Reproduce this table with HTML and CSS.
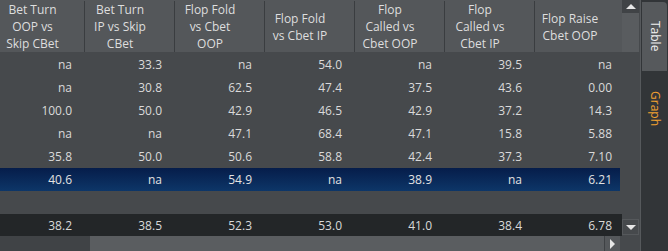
FILE: index.html
```html
<!DOCTYPE html>
<html>
<head>
<meta charset="utf-8">
<link rel="stylesheet" href="styles.css">
</head>
<body>
<div class="app">
  <div class="grid">
    <div class="viewport">
      <div class="row thead">
        <div class="hc">Bet Turn<br>OOP vs<br>Skip CBet</div>
        <div class="hc sep">Bet Turn<br>IP vs Skip<br>CBet</div>
        <div class="hc sep">Flop Fold<br>vs Cbet<br>OOP</div>
        <div class="hc sep">Flop Fold<br>vs Cbet IP</div>
        <div class="hc sep">Flop<br>Called vs<br>Cbet OOP</div>
        <div class="hc sep">Flop<br>Called vs<br>Cbet IP</div>
        <div class="hc sep">Flop Raise<br>Cbet OOP</div>
      </div>
      <div class="tbody">
        <div class="row tr"><div>na</div><div>33.3</div><div>na</div><div>54.0</div><div>na</div><div>39.5</div><div>na</div></div>
        <div class="row tr"><div>na</div><div>30.8</div><div>62.5</div><div>47.4</div><div>37.5</div><div>43.6</div><div>0.00</div></div>
        <div class="row tr"><div>100.0</div><div>50.0</div><div>42.9</div><div>46.5</div><div>42.9</div><div>37.2</div><div>14.3</div></div>
        <div class="row tr"><div>na</div><div>na</div><div>47.1</div><div>68.4</div><div>47.1</div><div>15.8</div><div>5.88</div></div>
        <div class="row tr"><div>35.8</div><div>50.0</div><div>50.6</div><div>58.8</div><div>42.4</div><div>37.3</div><div>7.10</div></div>
        <div class="row tr selected"><div>40.6</div><div>na</div><div>54.9</div><div>na</div><div>38.9</div><div>na</div><div>6.21</div></div>
      </div>
      <div class="row tfoot"><div>38.2</div><div>38.5</div><div>52.3</div><div>53.0</div><div>41.0</div><div>38.4</div><div>6.78</div></div>
    </div>
    <div class="vscroll">
      <div class="vbtn up"><span class="tri-up"></span></div>
      <div class="vthumb"></div>
      <div class="vtrack"></div>
      <div class="vbtn down"><span class="tri-down"></span></div>
    </div>
    <div class="hscroll">
      <div class="htrack"></div>
      <div class="hthumb"></div>
      <div class="hbtn"><span class="tri-right"></span></div>
    </div>
    <div class="corner"></div>
  </div>
  <div class="side">
    <div class="tab active"><span>Table</span></div>
    <div class="tab graph"><span>Graph</span></div>
  </div>
</div>
</body>
</html>
```

FILE: styles.css
```css
html, body {
  margin: 0;
  padding: 0;
  background: #46494c;
}
body {
  width: 668px;
  height: 251px;
  overflow: hidden;
  font-family: "Open Sans", "Noto Sans", sans-serif;
  font-size: 12px;
  color: #dadada;
}
.app {
  display: flex;
  width: 668px;
  height: 251px;
}
.grid {
  width: 640px;
  display: grid;
  grid-template-columns: 622px 17px;
  grid-template-rows: 236px 15px;
  border-right: 1px solid #56595c;
  background: #46494c;
}
.viewport {
  display: flex;
  flex-direction: column;
  overflow: hidden;
}
.row {
  display: grid;
  grid-template-columns: 84px repeat(6, 90px);
  width: 624px;
}
.thead {
  height: 52px;
  background: #54575a;
  align-items: stretch;
  flex: none;
}
.hc {
  display: flex;
  align-items: center;
  justify-content: center;
  text-align: center;
  line-height: 17px;
  padding-right: 19px;
  margin: 1px 0 2px;
  color: #dedede;
}
.hc:first-child {
  padding-right: 19px;
}
.hc.sep {
  border-left: 1px solid #3a3d40;
}
.tbody {
  flex: 1;
  padding-top: 1px;
}
.tr {
  height: 23px;
  align-items: center;
}
.tr div, .tfoot div {
  text-align: right;
  padding-right: 12px;
}
.tr.selected {
  width: 620px;
  overflow: hidden;
  background: linear-gradient(#061d4a, #0d3668);
  color: #e2e2e2;
}
.tfoot {
  height: 22px;
  flex: none;
  align-items: center;
  background: #232628;
}
.vscroll {
  display: flex;
  flex-direction: column;
  background: #46494c;
}
.vbtn {
  display: flex;
  align-items: center;
  justify-content: center;
}
.vbtn.up {
  height: 13px;
  background: #404346;
}
.vthumb {
  height: 39px;
  background: #595c5f;
}
.vtrack {
  flex: 1;
}
.vbtn.down {
  height: 15px;
  margin-bottom: 1px;
  border: 1px solid #55585b;
  box-sizing: border-box;
  height: 16px;
}
.tri-up {
  width: 0;
  height: 0;
  border-left: 5px solid transparent;
  border-right: 5px solid transparent;
  border-bottom: 5px solid #e6e6e6;
}
.tri-down {
  width: 0;
  height: 0;
  border-left: 5px solid transparent;
  border-right: 5px solid transparent;
  border-top: 5px solid #e6e6e6;
}
.hscroll {
  display: flex;
  height: 15px;
}
.htrack {
  width: 90px;
  background: #404346;
}
.hthumb {
  flex: 1;
  background: #5a5d60;
  border-right: 1px solid #3e4144;
}
.hbtn {
  width: 15px;
  margin-right: 2px;
  background: #55585b;
  display: flex;
  align-items: center;
  justify-content: center;
}
.tri-right {
  width: 0;
  height: 0;
  border-top: 5px solid transparent;
  border-bottom: 5px solid transparent;
  border-left: 5px solid #e6e6e6;
}
.corner {
  background: #46494c;
}
.side {
  flex: 1;
  background: #323538;
  display: flex;
  flex-direction: column;
  gap: 2px;
  padding: 2px 1px 0 1px;
}
.tab {
  height: 69px;
  display: flex;
  align-items: center;
  justify-content: center;
  border-radius: 0 4px 0 0;
}
.tab span {
  writing-mode: vertical-rl;
  line-height: 14px;
}
.tab.active {
  background: #56595c;
  color: #f0f0f0;
}
.tab.graph {
  height: 71px;
  color: #f0a030;
}
```
